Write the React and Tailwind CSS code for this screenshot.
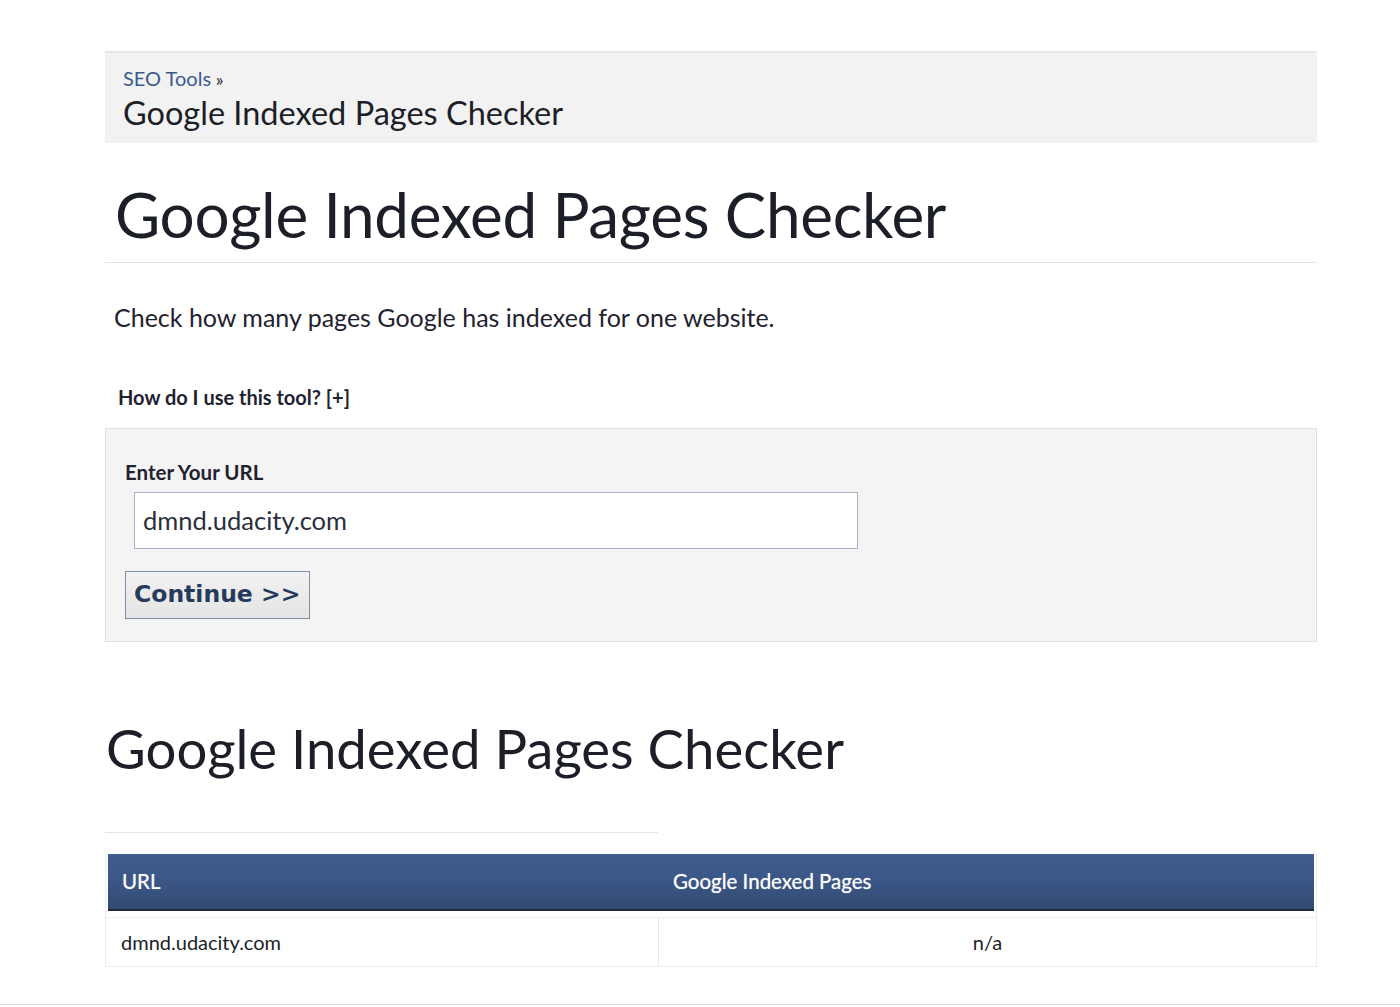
export default function App() {
  return (
    <div className="min-h-[1007px] bg-white font-['Lato','Noto_Sans',sans-serif] text-[#1f2230] flex flex-col">
      <div className="flex-1 pt-[51px] pl-[105px] w-[1317px]">
        {/* breadcrumb */}
        <div className="bg-[#f2f2f2] border-t-2 border-[#e6e6e6] h-[92px] pl-[18px] pt-[12px]">
          <div className="text-[20px] leading-[26px]">
            <a className="text-[#3c5a8c]">SEO Tools</a>
            <span className="text-[#1f2230] text-[18px]"> »</span>
          </div>
          <div className="text-[32.5px] leading-[41px] text-[#1c1e28]">Google Indexed Pages Checker</div>
        </div>

        <h1 className="text-[62px] leading-[72px] pl-[10px] pt-[35px] pb-[12px] border-b border-[#e3e3e3] text-[#1c1e28] tracking-[-0.3px]">
          Google Indexed Pages Checker
        </h1>

        <p className="text-[25px] leading-[30px] pl-[9px] mt-[39px]">
          Check how many pages Google has indexed for one website.
        </p>

        <div className="text-[20px] font-bold pl-[13px] mt-[53px] leading-[24px]">How do I use this tool? [+]</div>

        {/* form */}
        <div className="mt-[19px] bg-[#f4f4f4] border border-[#e2e2e2] h-[214px] pl-[19px] pt-[30px]">
          <div className="text-[20.5px] font-bold leading-[26px]">Enter Your URL</div>
          <div className="mt-[7px] ml-[9px] w-[724px] h-[57px] bg-white border border-[#a9b1c4] flex items-center pl-[8px] text-[25.5px] text-[#2b2f3d]">
            dmnd.udacity.com
          </div>
          <button className="mt-[22px] h-[48px] w-[185px] border border-[#7f8fa9] bg-gradient-to-b from-[#f2f2f2] to-[#e4e4e4] text-[#263a5c] font-bold text-[23.5px] font-['DejaVu_Sans',sans-serif] whitespace-nowrap text-left pl-[8px]">
            Continue &gt;&gt;
          </button>
        </div>

        <h2 className="text-[54.5px] leading-[64px] mt-[74px] pl-px text-[#1c1e28]">Google Indexed Pages Checker</h2>

        {/* results table */}
        <div className="mt-[52px] w-[553px] border-t border-[#e6e6e6]" />
        <div className="mt-[21px] w-[1212px] border-l border-r border-b border-[#ececec]">
          <div className="flex h-[57px] items-center bg-gradient-to-b from-[#3f5d8e] via-[#3b5686] to-[#334a72] border-b-2 border-[#222a3a] text-white text-[20.5px] mx-[2px] [text-shadow:0_0_1px_rgba(255,255,255,0.6)]">
            <div className="w-[551px] pl-[14px]">URL</div>
            <div className="flex-1 pl-[14px]">Google Indexed Pages</div>
          </div>
          <div className="flex h-[49px] mt-[6px] text-[20px] text-[#1c1e28] border-t border-[#eeeeee]">
            <div className="w-[553px] pl-[15px] flex items-center border-r border-[#e8e8e8]">dmnd.udacity.com</div>
            <div className="flex-1 flex items-center justify-center">n/a</div>
          </div>
        </div>
      </div>
      <div className="h-[3px] border-t border-[#d8d8d8] mt-[34px]" />
    </div>
  );
}
